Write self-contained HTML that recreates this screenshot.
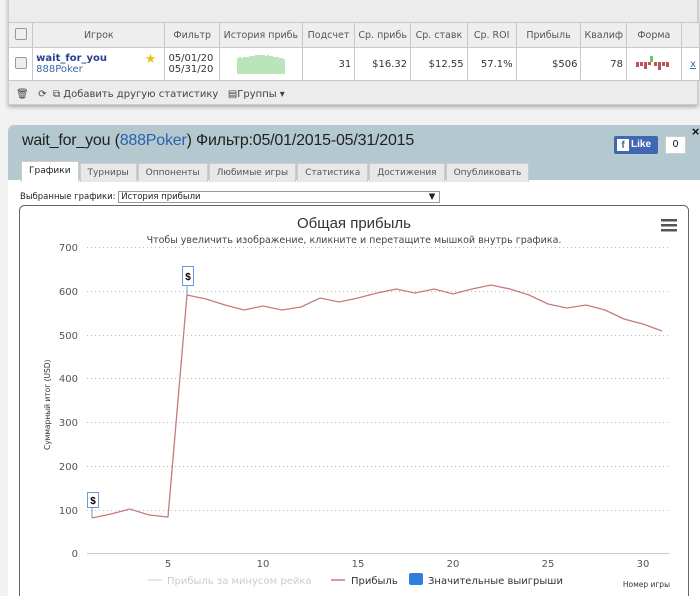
<!DOCTYPE html>
<html><head><meta charset="utf-8"><style>
html,body{margin:0;width:700px;height:596px;overflow:hidden}
body{background:#f2f2f2;font-family:"DejaVu Sans","Liberation Sans",sans-serif;position:relative}
.top{position:absolute;left:8px;top:-4px;width:688px;height:107px;background:#ececec;border:1px solid #ccc;box-shadow:0 2px 4px #aaa}
table{position:absolute;left:8px;top:22px;border-collapse:collapse;font-size:10px;color:#333}
td,th{border:1px solid #c8c8c8;padding:0 3px;white-space:nowrap;overflow:hidden}
th{height:24px;background:#eee;font-weight:normal;color:#555;font-size:9.5px}
td{height:32px;background:#fff;text-align:right}
.cb{width:10px;height:10px;border:1px solid #999;border-radius:2px;background:#eee;display:inline-block}
.tb{position:absolute;left:16px;top:89px;font-size:10px;color:#444}
.panel{position:absolute;left:8px;top:125px;width:692px;height:480px;background:#fff;border-radius:6px 0 0 0}
.hdr{height:55px;background:#b4c8cf;border-radius:6px 0 0 0;position:relative}
.title{position:absolute;left:14px;top:7px;font-family:"Liberation Sans",sans-serif;font-size:16px;letter-spacing:-0.2px;color:#222}
.tabs{position:absolute;left:13px;top:36px;font-size:9px;color:#555}
.tab{display:inline-block;height:18px;line-height:18px;padding:0 7px;background:#e8e8e8;border:1px solid #ccc;border-bottom:none;margin-right:1px;vertical-align:bottom}
.tab.a{background:#fff;color:#222;height:20px}
</style></head><body>
<div class="top"></div>
<table>
<tr><th style="width:18px"><span class="cb"></span></th><th style="width:134px">Игрок</th><th style="width:48px">Фильтр</th><th style="width:76px">История прибь</th><th style="width:46px">Подсчет</th><th style="width:49px">Ср. прибь</th><th style="width:50px">Ср. ставк</th><th style="width:43px">Ср. ROI</th><th style="width:60px">Прибыль</th><th style="width:35px">Квалиф</th><th style="width:49px">Форма</th><th style="width:12px"></th></tr>
<tr><td style="text-align:center"><span class="cb"></span></td><td style="text-align:left;position:relative"><b style="color:#2a3f8f">wait_for_you</b><br><span style="color:#3a6aa8">888Poker</span><span style="position:absolute;right:8px;top:4px;color:#e8c020;font-size:13px">★</span></td><td style="text-align:left">05/01/20<br>05/31/20</td><td style="text-align:center"><svg width="50" height="22"><g stroke="#5b5" stroke-width="0.8"><path d="M2 22V6M4 22V5M6 22V6M8 22V5M10 22V5M12 22V5M14 22V4M16 22V4M18 22V4M20 22V3M22 22V3M24 22V3M26 22V3M28 22V3M30 22V4M32 22V3M34 22V4M36 22V4M38 22V5M40 22V5M42 22V5M44 22V6M46 22V6M48 22V7"/></g></svg></td><td>31</td><td>$16.32</td><td>$12.55</td><td>57.1%</td><td>$506</td><td>78</td><td style="text-align:center"><svg width="40" height="22"><rect x="16" y="4" width="3" height="6" fill="#6c6"/><g fill="#b55"><rect x="2" y="10" width="3" height="5"/><rect x="6" y="10" width="3" height="4"/><rect x="10" y="10" width="3" height="7"/><rect x="14" y="10" width="3" height="3"/><rect x="20" y="10" width="3" height="4"/><rect x="24" y="10" width="3" height="8"/><rect x="28" y="10" width="3" height="4"/><rect x="32" y="10" width="3" height="5"/></g></svg></td><td style="color:#36c;text-decoration:underline">x</td></tr>
</table>
<div class="tb">🗑&nbsp;&nbsp; ⟳&nbsp; ⧉ Добавить другую статистику&nbsp;&nbsp; ▤Группы ▾</div>
<div class="panel">
<div class="hdr"><div class="title">wait_for_you (<span style="color:#2a62ad">888Poker</span>) Фильтр:05/01/2015-05/31/2015</div>
<div style="position:absolute;left:606px;top:11px;width:44px;height:18px;background:#4267b2;border-radius:2px;color:#fff;font:bold 10px 'Liberation Sans';line-height:18px"><span style="display:inline-block;width:12px;height:12px;background:#fff;color:#4267b2;margin:3px 2px 0 3px;vertical-align:top;line-height:14px;text-align:center">f</span>Like</div>
<div style="position:absolute;left:657px;top:11px;width:21px;height:18px;background:#fff;border:1px solid #ccc;box-sizing:border-box;font:10px 'Liberation Sans';text-align:center;line-height:16px">0</div>
<div style="position:absolute;left:683px;top:0;font-size:11px;font-weight:bold">×</div>
<div class="tabs"><span class="tab a">Графики</span><span class="tab">Турниры</span><span class="tab">Оппоненты</span><span class="tab">Любимые игры</span><span class="tab">Статистика</span><span class="tab">Достижения</span><span class="tab">Опубликовать</span></div>
</div>
<div style="position:absolute;left:12px;top:66px;font-size:8.5px;color:#222">Выбранные графики: <span style="display:inline-block;width:316px;border:1px solid #999;padding:0 2px;position:relative">История прибыли<span style="position:absolute;right:4px">▼</span></span></div>
</div>
<svg style="position:absolute;left:0;top:0" width="700" height="596">
<rect x="19.5" y="205.5" width="669" height="400" rx="5" fill="#fff" stroke="#666"/>
<text x="354" y="228" text-anchor="middle" font-family="Liberation Sans" font-size="15" fill="#333">Общая прибыль</text>
<text x="354" y="243" text-anchor="middle" font-family="DejaVu Sans" font-size="9.5" fill="#444">Чтобы увеличить изображение, кликните и перетащите мышкой внутрь графика.</text>
<g fill="#555"><rect x="661" y="219" width="16" height="2.5"/><rect x="661" y="224" width="16" height="2.5"/><rect x="661" y="229" width="16" height="2.5"/></g>
<g stroke="#bbb" stroke-dasharray="1,3"><path d="M87 247.5H670M87 291.5H670M87 335.5H670M87 378.5H670M87 422.5H670M87 466.5H670M87 510.5H670"/></g>
<path d="M87 553.5H670" stroke="#ccc"/>
<g font-family="DejaVu Sans" font-size="10" fill="#555" text-anchor="end"><text x="78" y="251">700</text><text x="78" y="295">600</text><text x="78" y="339">500</text><text x="78" y="382">400</text><text x="78" y="426">300</text><text x="78" y="470">200</text><text x="78" y="514">100</text><text x="78" y="557">0</text></g>
<g font-family="DejaVu Sans" font-size="10" fill="#555" text-anchor="middle"><text x="168" y="567">5</text><text x="263" y="567">10</text><text x="358" y="567">15</text><text x="453" y="567">20</text><text x="548" y="567">25</text><text x="643" y="567">30</text></g>
<text transform="translate(50 450) rotate(-90)" font-family="DejaVu Sans" font-size="7.5" fill="#333">Суммарный итог (USD)</text>
<polyline fill="none" stroke="#c47b7b" stroke-width="1.3" points="92,518 111,514 130,509 149,515 168,517 187,295 206,299 225,305 244,310 263,306 282,310 301,307 320,298 339,302 358,298 377,293 396,289 415,293 434,289 453,294 472,289 491,285 510,289 529,295 548,304 567,308 586,305 605,310 624,319 643,324 662,331"/>
<path d="M92 518V507M187 295V285" stroke="#6a9ad8"/>
<rect x="87.5" y="492.5" width="11" height="15" fill="#fff" stroke="#6a9ad8"/><text x="93" y="504" text-anchor="middle" font-size="10" font-weight="bold" font-family="Liberation Sans">$</text>
<rect x="182.5" y="266.5" width="11" height="19" fill="#fff" stroke="#6a9ad8"/><text x="188" y="280" text-anchor="middle" font-size="10" font-weight="bold" font-family="Liberation Sans">$</text>
<path d="M148 580H162" stroke="#ddd" stroke-width="1.5"/>
<text x="167" y="584" font-family="DejaVu Sans" font-size="10" fill="#ccc">Прибыль за минусом рейка</text>
<path d="M331 580H345" stroke="#c47b7b" stroke-width="1.5"/>
<text x="351" y="584" font-family="DejaVu Sans" font-size="10" fill="#333">Прибыль</text>
<rect x="409" y="573" width="14" height="12" rx="2" fill="#2f7ed8"/>
<text x="428" y="584" font-family="DejaVu Sans" font-size="10" fill="#333">Значительные выигрыши</text>
<text x="670" y="587" text-anchor="end" font-family="DejaVu Sans" font-size="7.5" fill="#333">Номер игры</text>
</svg>
</body></html>
